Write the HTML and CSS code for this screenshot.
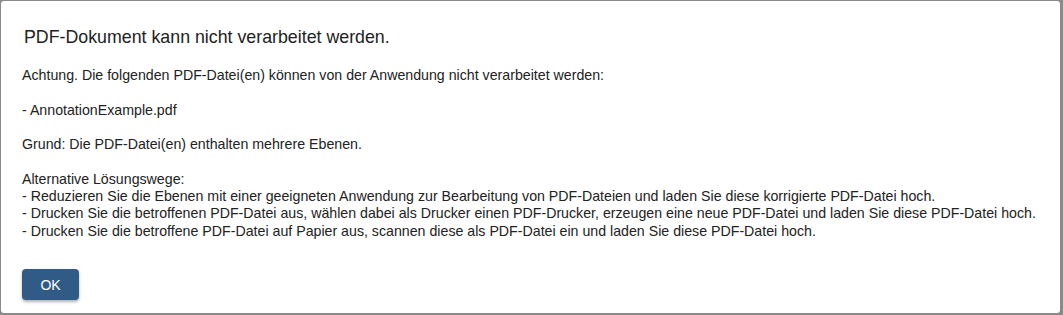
FILE: index.html
```html
<!DOCTYPE html>
<html lang="de">
<head>
<meta charset="utf-8">
<link rel="stylesheet" href="styles.css">
</head>
<body>
<div class="dialog">
  <h1 class="title">PDF-Dokument kann nicht verarbeitet werden.</h1>
  <div class="body">
    <p>Achtung. Die folgenden PDF-Datei(en) können von der Anwendung nicht verarbeitet werden:</p>
    <p>- AnnotationExample.pdf</p>
    <p>Grund: Die PDF-Datei(en) enthalten mehrere Ebenen.</p>
    <p>Alternative Lösungswege:<br>
    - Reduzieren Sie die Ebenen mit einer geeigneten Anwendung zur Bearbeitung von PDF-Dateien und laden Sie diese korrigierte PDF-Datei hoch.<br>
    - Drucken Sie die betroffenen PDF-Datei aus, wählen dabei als Drucker einen PDF-Drucker, erzeugen eine neue PDF-Datei und laden Sie diese PDF-Datei hoch.<br>
    - Drucken Sie die betroffene PDF-Datei auf Papier aus, scannen diese als PDF-Datei ein und laden Sie diese PDF-Datei hoch.</p>
  </div>
  <div class="actions">
    <button class="btn">OK</button>
  </div>
</div>
</body>
</html>
```
FILE: styles.css
```css
html, body {
  margin: 0;
  padding: 0;
  height: 100%;
}
body {
  background: #8a8a8a;
  font-family: "Liberation Sans", Arial, sans-serif;
  color: #222;
  padding: 1px 3px 2px 1px;
  box-sizing: border-box;
}
.dialog {
  background: #fff;
  height: 100%;
  box-sizing: border-box;
  border-radius: 3px;
  padding: 26px 21px 0 21px;
  display: flex;
  flex-direction: column;
}
.title {
  margin: 0 0 0 2px;
  font-size: 17.8px;
  font-weight: normal;
  line-height: 20px;
  color: #222;
}
.body {
  margin-top: 20px;
  font-size: 14.2px;
  line-height: 17.3px;
  color: #222;
}
.body p {
  margin: 0 0 17.3px 0;
}
.actions {
  margin-top: 12px;
}
.btn {
  background: #2f5b86;
  color: #fff;
  border: none;
  border-radius: 4px;
  width: 57px;
  height: 31px;
  font-family: "Liberation Sans", Arial, sans-serif;
  font-size: 14px;
  box-shadow: 0 2px 3px rgba(0,0,0,0.3);
  padding: 0;
}
```
